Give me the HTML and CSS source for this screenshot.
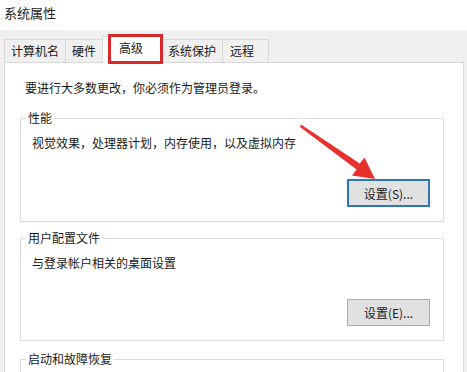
FILE: index.html
```html
<!DOCTYPE html>
<html lang="zh-CN">
<head>
    <meta charset="UTF-8">
    <title>系统属性</title>
    <link rel="stylesheet" href="styles.css">
</head>
<body>
    <div class="titlebar">系统属性</div>
    <div class="tabs">
        <div class="tab">计算机名</div>
        <div class="tab">硬件</div>
        <div class="tab active">高级</div>
        <div class="tab">系统保护</div>
        <div class="tab last">远程</div>
    </div>
    <div class="panel">
        <p class="intro">要进行大多数更改，你必须作为管理员登录。</p>
        <fieldset class="group">
            <legend>性能</legend>
            <p>视觉效果，处理器计划，内存使用，以及虚拟内存</p>
            <button class="btn focus">设置(S)...</button>
        </fieldset>
        <fieldset class="group">
            <legend>用户配置文件</legend>
            <p>与登录帐户相关的桌面设置</p>
            <button class="btn">设置(E)...</button>
        </fieldset>
        <fieldset class="group short">
            <legend>启动和故障恢复</legend>
        </fieldset>
    </div>
    <!-- 红色箭头标注 -->
    <svg class="arrow" width="467" height="372" viewBox="0 0 467 372">
        <polygon points="301,124.5 359.8,163.6 364.5,157.5 375,179 352,175.5 356.6,169.4 300,127" fill="#e8302c"/>
    </svg>
</body>
</html>
```

FILE: styles.css
```css
html,body{
    height:100%;
}
body{
    margin:0;
    position:relative;
    overflow:hidden;
    background:#f0f0f0;
    font-family:"Noto Sans CJK SC","Microsoft YaHei",sans-serif;
    font-size:12px;
    line-height:14px;
    color:#1a1a1a;
}
.titlebar{
    height:30px;
    background:#fff;
    padding:5px 0 0 4px;
    box-sizing:border-box;
    font-size:13px;
    line-height:16px;
}
.tabs{
    display:flex;
    align-items:flex-end;
    height:32px;
    padding-left:4px;
}
.tab{
    height:22px;
    line-height:21px;
    padding:0 6px;
    border:1px solid #d9d9d9;
    border-right:none;
    border-bottom:none;
    background:#f0f0f0;
}
.tab.last{
    border-right:1px solid #d9d9d9;
    padding:0 14px 0 7px;
}
.tab.active{
    position:relative;
    height:26px;
    line-height:22px;
    padding:0 18px 0 16px;
    margin-bottom:-1px;
    background:#fff;
    z-index:1;
}
/* 标注用的红框 */
.tab.active:after{
    content:"";
    position:absolute;
    left:5px;
    right:-2px;
    top:-3px;
    bottom:-1px;
    border:3px solid #d8282a;
}
.panel{
    margin:0 3px 0 4px;
    height:400px;
    background:#fff;
    border:1px solid #d9d9d9;
    padding:18px 19px 0 20px;
}
.intro{
    margin:0;
}
.group{
    display:flex;
    flex-direction:column;
    margin:16px 0 0 -5px;
    padding:11px 13px 14px 11px;
    border:1px solid #dcdcdc;
}
.group + .group{
    margin-top:9px;
}
.group.short{
    margin-top:11px;
    height:40px;
}
.group legend{
    margin-left:-6px;
    padding:0 2px;
}
.group p{
    margin:0;
}
.btn{
    align-self:flex-end;
    width:83px;
    height:27px;
    margin-top:29px;
    border:1px solid #adadad;
    background:#e1e1e1;
    font-family:inherit;
    font-size:12px;
    color:#1a1a1a;
    padding:0;
}
.btn.focus{
    height:28px;
    border:2px solid #2f78b7;
}
.arrow{
    position:absolute;
    left:0;
    top:0;
}
```
